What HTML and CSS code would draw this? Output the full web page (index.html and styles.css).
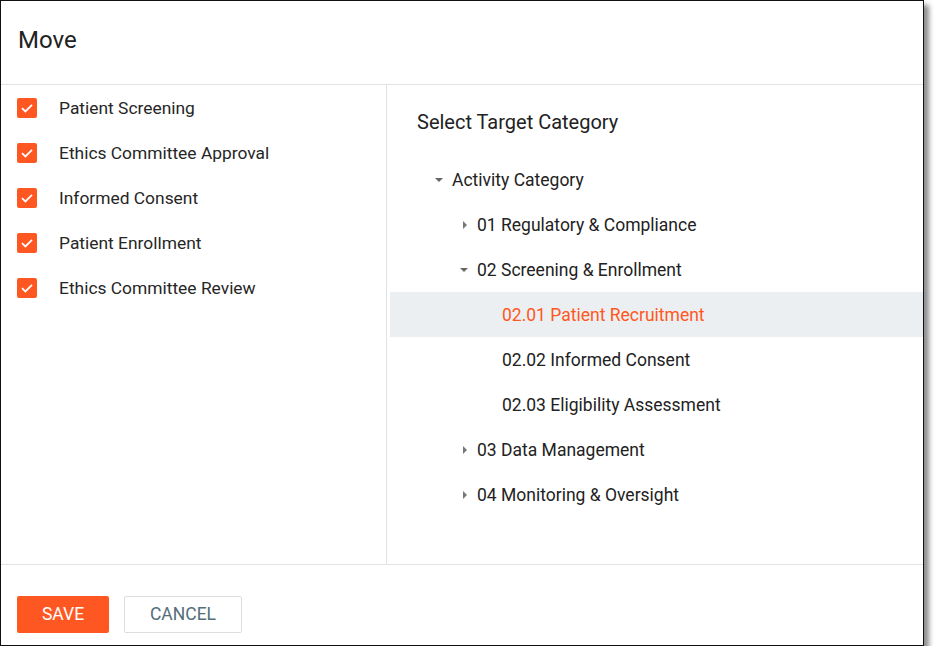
FILE: index.html
```html
<!DOCTYPE html>
<html>
<head>
<meta charset="utf-8">
<link rel="stylesheet" href="styles.css">
</head>
<body>
<div class="dialog">
  <div class="header"><h1 class="title">Move</h1></div>
  <div class="content">
    <ul class="items">
      <li class="item"><span class="cb"><svg viewBox="0 0 20 20" width="20" height="20"><path d="M5 10.2 L8.4 13.4 L15 6.8" fill="none" stroke="#fff" stroke-width="1.8"/></svg></span>Patient Screening</li>
      <li class="item"><span class="cb"><svg viewBox="0 0 20 20" width="20" height="20"><path d="M5 10.2 L8.4 13.4 L15 6.8" fill="none" stroke="#fff" stroke-width="1.8"/></svg></span>Ethics Committee Approval</li>
      <li class="item"><span class="cb"><svg viewBox="0 0 20 20" width="20" height="20"><path d="M5 10.2 L8.4 13.4 L15 6.8" fill="none" stroke="#fff" stroke-width="1.8"/></svg></span>Informed Consent</li>
      <li class="item"><span class="cb"><svg viewBox="0 0 20 20" width="20" height="20"><path d="M5 10.2 L8.4 13.4 L15 6.8" fill="none" stroke="#fff" stroke-width="1.8"/></svg></span>Patient Enrollment</li>
      <li class="item"><span class="cb"><svg viewBox="0 0 20 20" width="20" height="20"><path d="M5 10.2 L8.4 13.4 L15 6.8" fill="none" stroke="#fff" stroke-width="1.8"/></svg></span>Ethics Committee Review</li>
    </ul>
    <div class="target">
      <h2 class="target-title">Select Target Category</h2>
      <ul class="tree">
        <li class="node lvl0"><span class="tw down"></span>Activity Category</li>
        <li class="node lvl1"><span class="tw right"></span>01 Regulatory &amp; Compliance</li>
        <li class="node lvl1"><span class="tw down"></span>02 Screening &amp; Enrollment</li>
        <li class="node lvl2 selected">02.01 Patient Recruitment</li>
        <li class="node lvl2">02.02 Informed Consent</li>
        <li class="node lvl2">02.03 Eligibility Assessment</li>
        <li class="node lvl1"><span class="tw right"></span>03 Data Management</li>
        <li class="node lvl1"><span class="tw right"></span>04 Monitoring &amp; Oversight</li>
      </ul>
    </div>
  </div>
  <div class="footer">
    <button class="btn save">SAVE</button>
    <button class="btn cancel">CANCEL</button>
  </div>
</div>
</body>
</html>
```

FILE: styles.css
```css
* { box-sizing: border-box; }
html, body { margin: 0; padding: 0; background: #fff; }
body { font-family: Roboto, "Noto Sans", Arial, sans-serif; color: #212121; }
.dialog {
  width: 924px;
  height: 646px;
  border: 1px solid #111;
  background: #fff;
  display: flex;
  flex-direction: column;
  box-shadow: 5px 5px 5px rgba(0,0,0,0.45);
}
.header {
  height: 84px;
  border-bottom: 1px solid #e2e2e2;
  display: flex;
  align-items: center;
  padding-left: 17px;
  padding-bottom: 6px;
}
.title { margin: 0; font-size: 24px; font-weight: 400; color: #222; }
.content { flex: 1; display: flex; min-height: 0; }
.items {
  list-style: none; margin: 0; padding: 0;
  width: 386px; border-right: 1px solid #e2e2e2;
}
.item {
  height: 45px; display: flex; align-items: center;
  padding-left: 16px; font-size: 17.4px; color: #262626;
}
.cb {
  width: 20px; height: 20px; border-radius: 2px; background: #ff5722;
  margin-right: 22px; display: inline-flex;
}
.target { flex: 1; padding-top: 14px; padding-left: 3px; }
.target-title {
  margin: 0 0 13px 27px; height: 45px; display: flex; align-items: center;
  font-size: 20px; font-weight: 400; color: #222;
}
.tree { list-style: none; margin: 0; padding: 0; }
.node {
  height: 45px; display: flex; align-items: center; font-size: 17.5px; color: #222;
}
.lvl0 { padding-left: 45px; }
.lvl1 { padding-left: 70px; }
.lvl2 { padding-left: 112px; }
.selected { background: #eceff1; color: #ff5722; }
.tw { width: 17px; display: inline-flex; align-items: center; justify-content: flex-start; }
.tw.down::before {
  content: ""; border-left: 4px solid transparent; border-right: 4px solid transparent;
  border-top: 4px solid #666;
}
.tw.right::before {
  content: ""; border-top: 4px solid transparent; border-bottom: 4px solid transparent;
  border-left: 4px solid #777; margin-left: 3px;
}
.footer {
  height: 81px; border-top: 1px solid #e2e2e2;
  display: flex; align-items: center; padding: 18px 0 0 16px; gap: 15px;
}
.btn {
  font-family: Roboto, "Noto Sans", Arial, sans-serif; font-size: 17.5px; height: 37px;
  border-radius: 2px; cursor: pointer;
}
.save { width: 92px; background: #ff5722; color: #fff; border: none; }
.cancel { width: 118px; background: #fff; color: #546e7a; border: 1px solid #ddd; }
```
